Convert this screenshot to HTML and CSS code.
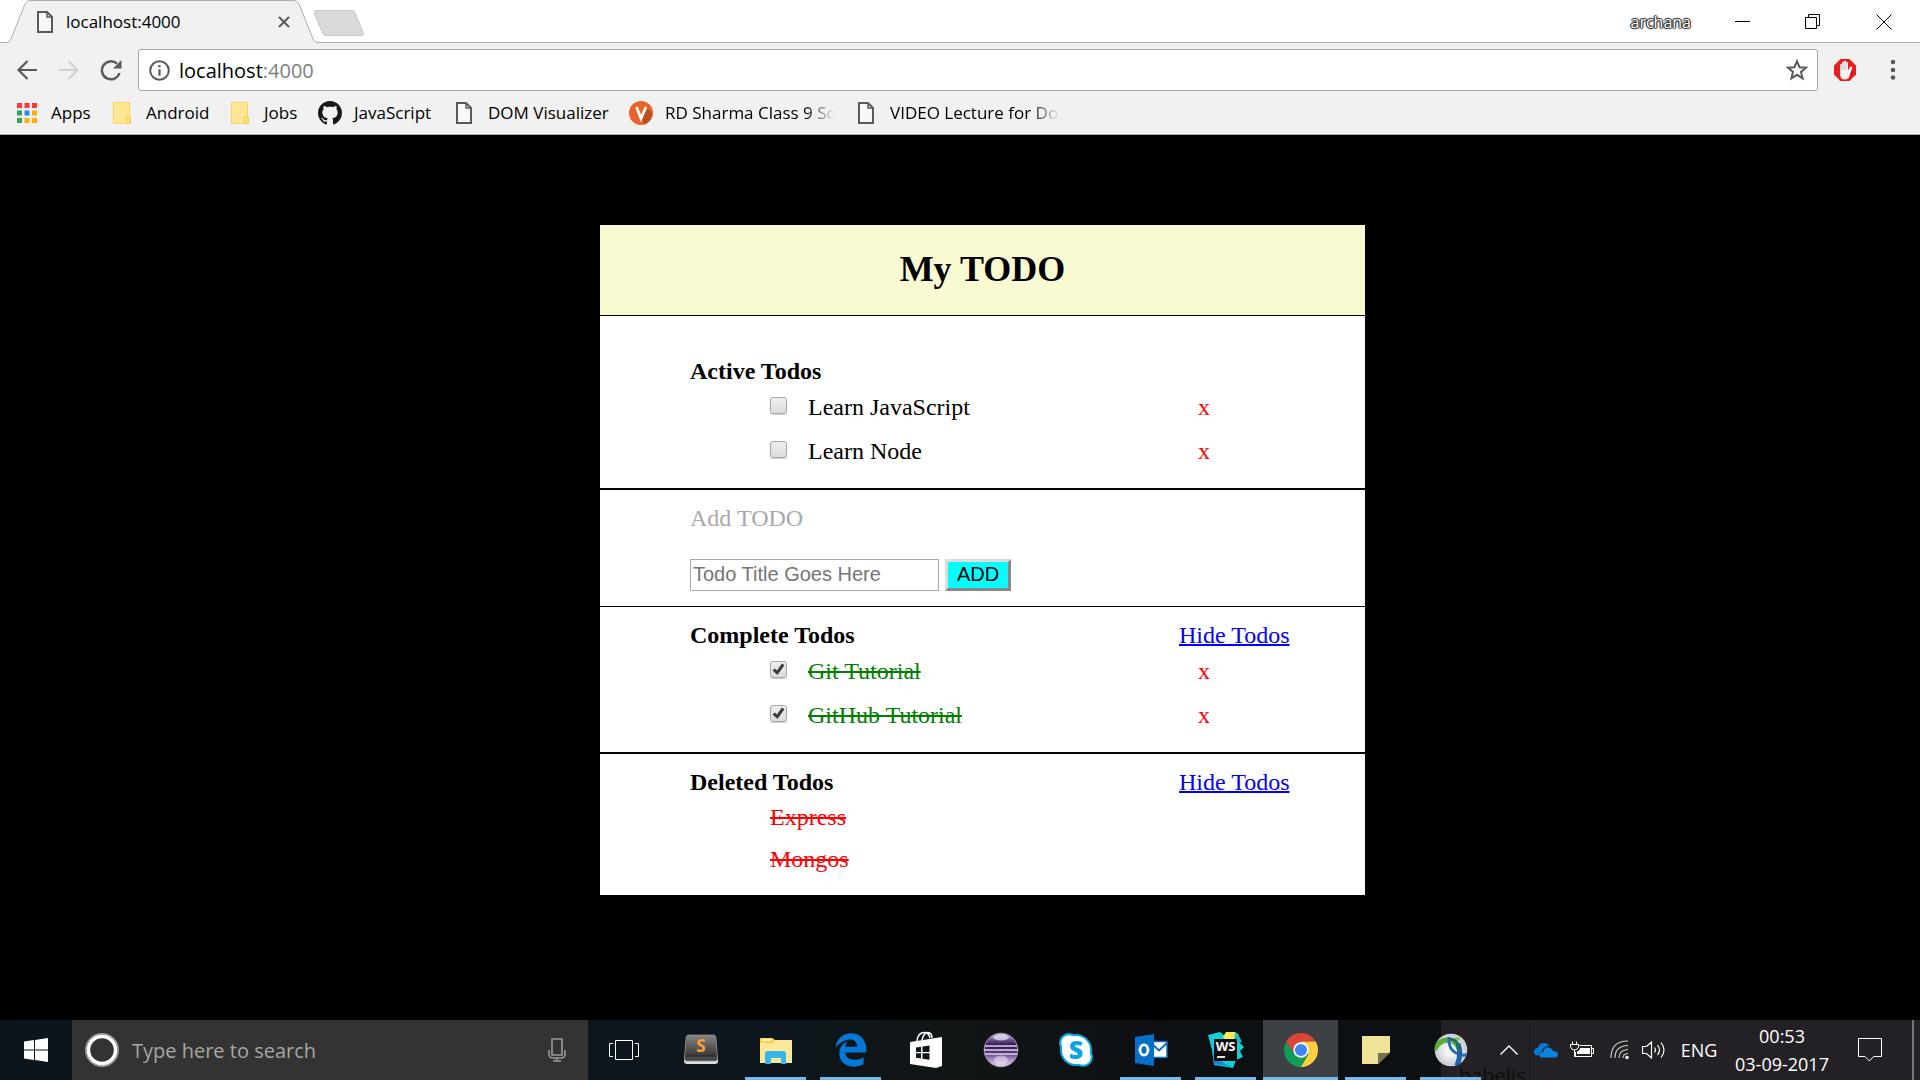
FILE: index.html
```html
<!DOCTYPE html>
<html lang="en">
<head>
<meta charset="utf-8">
<title>localhost:4000</title>
<link rel="stylesheet" href="styles.css">
</head>
<body>
<svg class="defs" width="0" height="0" aria-hidden="true">
  <defs>
    <symbol id="file" viewBox="0 0 16 22"><path d="M1 1h9l5 5v15H1z" fill="#f8f8f8" stroke="#5a5a5a" stroke-width="2"/><path d="M10 1v5h5" fill="none" stroke="#5a5a5a" stroke-width="1.5"/></symbol>
    <symbol id="folder" viewBox="0 0 18 22"><path d="M.5.5h16v14l1 1v6H.5z" fill="#ffe694" stroke="#f7d560"/><path d="M13.5 21.500v-6.500h3.500v6.500z" fill="#ffe694" stroke="#f2cb45"/></symbol>
  </defs>
</svg>

<header class="browser">
  <div class="tabstrip">
    <div class="tab">
      <svg class="tab-shape" viewBox="0 0 312 43" aria-hidden="true"><path d="M0 43L2 42Q3 41 4 39L18 4Q20 .5 23 .5H287Q290 .5 292 4L306 39Q307 42 310 42.500V43z" fill="#f1f1f1"/><path d="M0 42.500Q3 42 4 39L18 4Q20 .5 23 .5H287Q290 .5 292 4L306 39Q307 42 311 42.500" fill="none" stroke="#acacac"/></svg>
      <svg class="tab-icon" width="16" height="22"><use href="#file"/></svg>
      <span class="tab-title">localhost:4000</span>
      <button class="plain tab-close" aria-label="Close tab"><svg width="12" height="12" viewBox="0 0 12 12"><path d="M1 1l10 10M11 1L1 11" stroke="#5a5a5a" stroke-width="2"/></svg></button>
    </div>
    <button class="plain new-tab" aria-label="New tab"><svg width="52" height="26" viewBox="0 0 52 26"><path d="M3 .5H39Q41 .5 42 2.500L50 22Q51 25.500 49 25.500H13Q10.500 25.500 9.500 23L1.500 4Q.5.5 3 .5z" fill="#d9d9d9" stroke="#c9c9c9"/></svg></button>
    <div class="window-controls">
      <span class="user">archana</span>
      <button class="plain" aria-label="Minimize"><svg width="16" height="16" viewBox="0 0 16 16"><path d="M0 7.500h15" stroke="#000"/></svg></button>
      <button class="plain" aria-label="Restore"><svg width="16" height="16" viewBox="0 0 16 16"><path d="M.5 3.500h11v11H.5zM3.500 3V.5h11v11H12" fill="none" stroke="#000"/></svg></button>
      <button class="plain" aria-label="Close"><svg width="16" height="16" viewBox="0 0 16 16"><path d="M.5.5l15 15M15.500.5l-15 15" stroke="#000"/></svg></button>
    </div>
  </div>

  <div class="toolbar">
    <button class="plain nav" aria-label="Back"><svg width="22" height="22" viewBox="0 0 22 22"><path d="M21 11H3M11.500 2L2.500 11l9 9" fill="none" stroke="#5a5a5a" stroke-width="2.200"/></svg></button>
    <button class="plain nav" aria-label="Forward"><svg width="22" height="22" viewBox="0 0 22 22"><path d="M1 11h18M10.500 2l9 9-9 9" fill="none" stroke="#d2d2d2" stroke-width="2.200"/></svg></button>
    <button class="plain nav" aria-label="Reload"><svg width="22" height="22" viewBox="0 0 22 22"><path d="M19.500 14A9 9 0 1 1 17 4.700" fill="none" stroke="#5a5a5a" stroke-width="2.500"/><path d="M21.500 1v8.500H13z" fill="#5a5a5a"/></svg></button>
    <div class="omnibox">
      <svg width="21" height="21" viewBox="0 0 21 21"><circle cx="10.500" cy="10.500" r="9.300" fill="none" stroke="#5a5a5a" stroke-width="2"/><path d="M10.500 5v2.200M10.500 9.200v6.500" stroke="#5a5a5a" stroke-width="2.200"/></svg>
      <span class="url">localhost<span class="port">:4000</span></span>
      <button class="plain star" aria-label="Bookmark this page"><svg width="22" height="22" viewBox="0 0 22 22"><path d="M11 2.200l2.500 6 6.500.5-5 4.200 1.600 6.400-5.600-3.500-5.600 3.500L7 12.900 2 8.700l6.500-.5z" fill="none" stroke="#5a5a5a" stroke-width="2"/></svg></button>
    </div>
    <button class="plain block" aria-label="Ad blocker"><svg width="24" height="24" viewBox="0 0 24 24"><path d="M7.500 1h9L23 7.500v9L16.500 23h-9L1 16.500v-9z" fill="#ec1c1c"/><path d="M13 22l7-6-2-7z" fill="#c41010"/><path d="M7.200 14V6.500q.9-1.500 1.800 0V4.300q1-1.500 2 0V3.200q1-1.500 2 0v1.300q1-1.500 2 0v8l1.800-3.300q1.700-1.500 2.700 0L17 16.500q-1 5-5 5Q7.500 21.500 7.200 17z" fill="#f4f4f4"/><path d="M9 6.500V12M11 4.300V12M13 4.500V12" stroke="#c4b0b0" stroke-width=".7"/></svg></button>
    <button class="plain menu" aria-label="Menu"><svg width="6" height="22" viewBox="0 0 6 22"><g fill="#5a5a5a"><circle cx="3" cy="3" r="2.300"/><circle cx="3" cy="11" r="2.300"/><circle cx="3" cy="18.500" r="2.300"/></g></svg></button>
  </div>

  <nav class="bookmarks">
    <a href="#"><svg width="24" height="24" viewBox="0 0 24 24"><g fill="#f33b3b"><path d="M2 2h5v5H2zM9.500 2h5v5h-5zM17 2h5v5h-5z"/></g><path d="M2 9.500h5v5H2zM2 17h5v5H2z" fill="#34a156"/><path d="M9.500 9.500h5v5h-5z" fill="#1e8cf5"/><path d="M17 9.500h5v5h-5zM9.500 17h5v5h-5zM17 17h5v5h-5z" fill="#fdae0c"/></svg><span>Apps</span></a>
    <a href="#"><svg width="24" height="22"><use href="#folder"/></svg><span>Android</span></a>
    <a href="#"><svg width="24" height="22"><use href="#folder"/></svg><span>Jobs</span></a>
    <a href="#"><svg width="24" height="24" viewBox="0 0 16 16"><path fill="#191717" d="M8 0C3.580 0 0 3.580 0 8c0 3.540 2.290 6.530 5.470 7.590.4.070.55-.17.55-.38 0-.19-.01-.82-.01-1.490-2.010.37-2.530-.49-2.690-.94-.09-.23-.48-.94-.82-1.130-.28-.15-.68-.52-.01-.53.63-.01 1.080.58 1.230.82.72 1.210 1.870.87 2.330.66.070-.52.28-.87.51-1.070-1.780-.2-3.640-.89-3.640-3.950 0-.87.31-1.590.82-2.150-.08-.2-.36-1.020.08-2.120 0 0 .67-.21 2.200.82.64-.18 1.320-.27 2-.27.68 0 1.360.09 2 .27 1.530-1.040 2.200-.82 2.200-.82.44 1.100.16 1.920.08 2.120.51.56.82 1.270.82 2.150 0 3.070-1.870 3.750-3.650 3.950.29.25.54.73.54 1.480 0 1.070-.01 1.930-.01 2.200 0 .21.15.46.55.38A8.013 8.013 0 0016 8c0-4.420-3.580-8-8-8z"/></svg><span>JavaScript</span></a>
    <a href="#"><svg width="24" height="22"><use href="#file"/></svg><span>DOM Visualizer</span></a>
    <a href="#"><svg width="24" height="24" viewBox="0 0 24 24"><circle cx="12" cy="12" r="12" fill="#e8642c"/><path d="M13 18l4.500-12L23 12q0 8-8 11.500z" fill="#b9501f"/><path d="M7.500 6L12 17.500 17 6" fill="none" stroke="#fff" stroke-width="2.800"/></svg><span class="fade">RD Sharma Class 9 Science</span></a>
    <a href="#"><svg width="24" height="22"><use href="#file"/></svg><span class="fade">VIDEO Lecture for Download</span></a>
  </nav>
</header>

<main class="page">
  <div class="card">
    <h1>My TODO</h1>
    <section class="active">
      <h2>Active Todos</h2>
      <ul class="tasks">
        <li><input type="checkbox" id="t1"><label for="t1">Learn JavaScript</label><button class="plain remove">x</button></li>
        <li><input type="checkbox" id="t2"><label for="t2">Learn Node</label><button class="plain remove">x</button></li>
      </ul>
    </section>
    <section class="add">
      <label class="add-label" for="title">Add TODO</label>
      <div class="add-form">
        <input type="text" id="title" placeholder="Todo Title Goes Here">
        <button class="add-button">ADD</button>
      </div>
    </section>
    <section class="complete">
      <div class="head"><h2>Complete Todos</h2><a href="#">Hide Todos</a></div>
      <ul class="tasks done">
        <li><input type="checkbox" id="t3" checked><label for="t3">Git Tutorial</label><button class="plain remove">x</button></li>
        <li><input type="checkbox" id="t4" checked><label for="t4">GitHub Tutorial</label><button class="plain remove">x</button></li>
      </ul>
    </section>
    <section class="deleted">
      <div class="head"><h2>Deleted Todos</h2><a href="#">Hide Todos</a></div>
      <ul class="gone">
        <li>Express</li>
        <li>Mongos</li>
      </ul>
    </section>
  </div>
</main>

<footer class="taskbar">
  <button class="plain start" aria-label="Start"><svg width="24" height="24" viewBox="0 0 24 24"><path d="M0 3.500l10-1.400V11.500H0zM11 2l13-2v11.500H11zM0 12.500h10v9.400L0 20.500zM11 12.500h13V24l-13-2z" fill="#fff"/></svg></button>
  <div class="search">
    <svg width="36" height="36" viewBox="0 0 36 36"><circle cx="18" cy="18" r="15" fill="none" stroke="#999" stroke-width="4"/><circle cx="18" cy="18" r="13.500" fill="none" stroke="#fff" stroke-width="3.400"/></svg>
    <input type="text" aria-label="Search" placeholder="Type here to search">
    <svg width="18" height="24" viewBox="0 0 18 24"><path d="M4 1h10v16H4zM1 12v4q0 4 4 4h8q4 0 4-4v-4M9 20v3M5 23h8" fill="none" stroke="#999" stroke-width="1.600"/></svg>
  </div>
  <button class="plain task-view" aria-label="Task view"><svg width="30" height="20" viewBox="0 0 30 20"><path d="M6.500.5h17v19h-17zM4 3.500H.5v13H4M26 3.500h3.500v13H26" fill="none" stroke="#fff"/></svg></button>

  <button class="plain app" aria-label="Sublime Text"><svg width="36" height="36" viewBox="0 0 36 36"><defs><linearGradient id="sub" x1="0" y1="0" x2="0" y2="1"><stop offset="0" stop-color="#858585"/><stop offset=".75" stop-color="#3d3d3d"/></linearGradient></defs><path d="M4 5L1 29q0 3 3 3h28q3 0 3-3L32 5z" fill="#ddd"/><path d="M5 3h26q1.500 0 2 3l1.500 20q0 3-2 3h-29q-2 0-2-3L3 6q.5-3 2-3z" fill="url(#sub)" stroke="#999" stroke-width=".7"/><path d="M3 24h30v4H3z" fill="#4a4a4a"/><path d="M3 24h30" stroke="#222"/><text x="18" y="20" text-anchor="middle" font-family="Open Sans, sans-serif" font-weight="700" font-size="17" fill="#ffa12c">S</text></svg></button>
  <button class="plain app open" aria-label="File Explorer"><svg width="36" height="36" viewBox="0 0 36 36"><path d="M2 6h12l3 2h17v23H2z" fill="#ffe79a"/><path d="M2 6h12l3 3-2 2H2z" fill="#ffd044"/><path d="M4 8h9" stroke="#fff" stroke-width="1.500"/><path d="M7 32V22q0-3 3-3h15q3 0 3 3v10h-5v-6H13v6z" fill="#37b4ea"/></svg></button>
  <button class="plain app open" aria-label="Edge"><svg width="40" height="40" viewBox="0 0 24 24"><path d="M2.740 10.810C3.830-1.360 22.500-1.360 21.200 13.560H8.610C8.610 17.850 14.420 19.210 19.540 16.310V20.530C13.250 23.880 5 21.430 5 14.090 5 8.580 9.970 6.810 9.970 6.810S8.580 8.580 8.540 10.050H15.700C15.700 2.930 5.900 5.570 2.740 10.810z" fill="#0478d7"/></svg></button>
  <button class="plain app" aria-label="Store"><svg width="34" height="38" viewBox="0 0 34 38"><path d="M1 11l32-5v29l-6 2-26-4z" fill="#fff"/><path d="M8 10Q9 1 16 1.500 20 2 21 7M13 9Q15 1 19 1.500 23 2 23 7" fill="none" stroke="#fff" stroke-width="1.500"/><path d="M7 16.500l5-.8v5.300H7zM13.500 15.500l7-1v6.500h-7zM7 22.300h5v5.200l-5-.7zM13.500 22.300h7v6.500l-7-1z" fill="#10171a"/></svg></button>
  <button class="plain app" aria-label="Eclipse"><svg width="36" height="36" viewBox="0 0 36 36"><defs><linearGradient id="ecl" x1="0" y1="0" x2="0" y2="1"><stop offset="0" stop-color="#cdbfda"/><stop offset=".2" stop-color="#6d5488"/><stop offset=".36" stop-color="#2c1550"/><stop offset=".6" stop-color="#5d3c82"/><stop offset=".75" stop-color="#9f83ba"/><stop offset="1" stop-color="#e6dcee"/></linearGradient></defs><circle cx="18" cy="18" r="16.800" fill="url(#ecl)" stroke="#a994bd"/><ellipse cx="18" cy="5.500" rx="8" ry="3" fill="#eee8f4" opacity=".7"/><ellipse cx="18" cy="28" rx="7" ry="4.500" fill="#f3edf7" opacity=".5"/><path d="M2 14h32M1 18h34M2 22h32" stroke="#e0d5ea" stroke-width="1.300"/></svg></button>
  <button class="plain app" aria-label="Skype"><svg width="36" height="36" viewBox="0 0 36 36"><g fill="#0aa6e2"><circle cx="18" cy="18" r="16"/><circle cx="11" cy="11" r="10"/><circle cx="25" cy="25" r="10"/></g><g fill="#fff"><circle cx="18" cy="18" r="14"/><circle cx="11" cy="11" r="7.800"/><circle cx="25" cy="25" r="7.800"/></g><text x="18" y="27" text-anchor="middle" font-family="Open Sans, sans-serif" font-weight="800" font-size="25" fill="#0aa6e2">S</text></svg></button>
  <button class="plain app open" aria-label="Outlook"><svg width="36" height="36" viewBox="0 0 36 36"><path d="M19 9.500h15v16H19z" fill="#fff" stroke="#0a6cbd" stroke-width="1.500"/><path d="M19 12l7 6.500 8-7.500" fill="none" stroke="#0a6cbd" stroke-width="2"/><path d="M2 5l19-3v32L2 31z" fill="#0670c8"/><ellipse cx="11" cy="18" rx="4" ry="5.200" fill="none" stroke="#fff" stroke-width="2.800"/></svg></button>
  <button class="plain app open" aria-label="WebStorm"><svg width="38" height="38" viewBox="0 0 38 38"><path d="M1 4l12-3 4 3 8-3 7 10 5 5-4 4 3 6-7 3-3 8-19-3-2-15z" fill="#0ed1dc"/><path d="M16 6l3-5h9l4 3-11 9z" fill="#f5ef4e"/><path d="M28 1l4 4 3 6-8 2z" fill="#12bfcf"/><path d="M6 24l12 9 8 3-19-3z" fill="#1586d8"/><path d="M7 8h23v22H7z" fill="#0b0b0b"/><text x="18.500" y="20" text-anchor="middle" font-family="Open Sans, sans-serif" font-weight="700" font-size="13" fill="#fff">WS</text><path d="M10 26h8" stroke="#fff" stroke-width="1.800"/></svg></button>
  <button class="plain app open current" aria-label="Chrome"><svg width="34" height="34" viewBox="0 0 34 34"><path d="M17 17L2.300 8.500A17 17 0 0 1 31.700 8.500H17z" fill="#db4437"/><path d="M17 17l7.400 4.300L17 34A17 17 0 0 1 2.300 8.500L9.600 21.300z" fill="#0f9d58"/><path d="M17 8.500h14.700A17 17 0 0 1 17 34l7.400-12.700z" fill="#ffcd40"/><path d="M2.300 8.500L17 8.500v8.500L9.600 21.300z" fill="#db4437"/><path d="M2.300 8.500l7.300 12.800L17 30z" fill="#0f9d58"/><circle cx="17" cy="17" r="7.700" fill="#fff"/><circle cx="17" cy="17" r="6.100" fill="#4285f4"/></svg></button>
  <button class="plain app open" aria-label="Sticky Notes"><svg width="28" height="28" viewBox="0 0 28 28"><path d="M0 0h28v16L16 28H0z" fill="#efe498"/><path d="M16 28V17h12z" fill="#75704e"/></svg></button>
  <button class="plain app open last" aria-label="AnyConnect"><svg width="34" height="34" viewBox="0 0 34 34"><defs><radialGradient id="orb"><stop offset=".3" stop-color="#f4f6f7"/><stop offset="1" stop-color="#c4cacd"/></radialGradient><clipPath id="disc"><circle cx="17" cy="17" r="16.500"/></clipPath></defs><g clip-path="url(#disc)"><circle cx="17" cy="17" r="16.500" fill="url(#orb)"/><path d="M0 17Q5 7 14 7q8 0 11 9" fill="none" stroke="#56ae35" stroke-width="5"/><path d="M15 10q5-5 11-4" fill="none" stroke="#8cc36f" stroke-width="3"/><path d="M15 4q-1 12 7 16t12 1" fill="none" stroke="#2a6fa8" stroke-width="3"/><path d="M24 11q4 9-1 22" fill="none" stroke="#1c60ab" stroke-width="5"/><path d="M16 6q9 1 9 11" fill="none" stroke="#1f7060" stroke-width="3"/></g></svg></button>

  <div class="tray">
    <span class="desktop-label">babelis</span>
    <button class="plain chevron" aria-label="Show hidden icons"><svg width="18" height="10" viewBox="0 0 18 10"><path d="M.5 9.500L9 1l8.500 8.500" fill="none" stroke="#fff" stroke-width="1.400"/></svg></button>
    <button class="plain cloud" aria-label="OneDrive"><svg width="26" height="16" viewBox="0 0 26 16"><path d="M7 13Q1 14 1 10t4-4.500Q6 1 11 1q4 0 5 3-7 1-7 6-2 0-2 3z" fill="#0478d7"/><path d="M8 15.500q-3-2-.5-4.500l2.500-.7Q11 5 15.500 5.500 19 6 20 9q5 0 5 3.500 0 3-3 3z" fill="#0a82df"/></svg></button>
    <button class="plain battery" aria-label="Battery"><svg width="24" height="18" viewBox="0 0 24 18"><path d="M9.500 4.500h12v11h-16V11M22 7.500h1.500v5H22" fill="none" stroke="#fff"/><path d="M10 7h10v6H7v-2.500q3-1 3-3.500z" fill="#fff"/><path d="M2.500.5v3M6.500.5v3M.5 3.500h8V6q-1 3-4 3T.5 6zM4.500 9v6.500h2" fill="none" stroke="#fff"/></svg></button>
    <button class="plain wifi" aria-label="Wi-Fi"><svg width="20" height="20" viewBox="0 0 20 20"><g fill="none" stroke="#c8c8c8" stroke-width="1.200"><path d="M1 18Q1 1 18 1M5 18Q5 6 18 5.500M9 18q0-8 9-8.500M13 18q0-4 5-4.500"/></g><circle cx="17" cy="17.500" r="1.800" fill="#fff"/></svg></button>
    <button class="plain volume" aria-label="Volume"><svg width="24" height="18" viewBox="0 0 24 18"><path d="M.5 5.500h4L9.500 1v16l-5-4.500h-4zM12.500 6.500q2 2.500 0 5M15.500 4q4 5 0 10M19 1.500q6 7.500 0 15" fill="none" stroke="#fff" stroke-width="1.200"/></svg></button>
    <button class="plain lang">ENG</button>
    <button class="plain clock"><span>00:53</span><span>03-09-2017</span></button>
    <button class="plain notify" aria-label="Notifications"><svg width="24" height="24" viewBox="0 0 24 24"><path d="M.5.500h23v18h-8L11.500 23l-4.500-4.500H.5z" fill="none" stroke="#fff"/></svg></button>
    <button class="plain show-desktop" aria-label="Show desktop"></button>
  </div>
</footer>
</body>
</html>
```
FILE: styles.css
```css
* { box-sizing: border-box; }

body {
  margin: 0;
  min-height: 100vh;
  display: flex;
  flex-direction: column;
  background: #000;
  color: #000;
}

svg { display: block; flex: none; }
.defs { position: absolute; }

.plain {
  padding: 0;
  border: 0;
  background: none;
  font: inherit;
  color: inherit;
  display: flex;
  align-items: center;
  justify-content: center;
}

/* Browser window */
.browser {
  font-family: "Open Sans", "Noto Sans", sans-serif;
  font-size: 17px;
  background: #f1f1f1;
  border-bottom: 1px solid #a9a9a9;
}

.tabstrip {
  display: flex;
  height: 43px;
  padding-left: 7px;
  background: #fff;
  box-shadow: inset 0 -1px #acacac;
}

.tab {
  position: relative;
  width: 306px;
  padding: 0 23px 0 30px;
  display: flex;
  align-items: center;
}
.tab-shape { position: absolute; left: 0; top: 0; width: 312px; height: 43px; }
.tab-icon, .tab-title, .tab-close { position: relative; }
.tab-title { flex: 1; margin-left: 13px; }

.new-tab { align-items: flex-start; padding-top: 10px; }

.window-controls {
  margin-left: auto;
  display: flex;
  align-items: center;
}
.window-controls button { width: 70px; height: 41px; }
.window-controls button:last-child { width: 72px; }
.user {
  margin-right: 17px;
  font-size: 16px;
  line-height: 38px;
  color: #fff;
  text-shadow: -1px 0 1px #222, 1px 0 1px #222, 0 -1px 1px #222, 0 1px 1px #222, 0 0 2px #222;
}

.toolbar {
  display: flex;
  align-items: center;
  padding: 6px 24px 0 6px;
}
.nav { width: 42px; height: 42px; }
.omnibox {
  flex: 1;
  height: 42px;
  margin-left: 6px;
  padding: 0 9px 0 10px;
  display: flex;
  align-items: center;
  gap: 9px;
  background: #fff;
  border: 1px solid #a6a6a6;
  border-radius: 3px;
}
.url { flex: 1; font-size: 20px; }
.port { color: #808080; }
.block { margin-left: 15px; }
.menu { margin-left: 33px; }

.bookmarks {
  height: 43px;
  padding-left: 15px;
  display: grid;
  grid-template-columns: 95px 118px 90px 134px 177px 225px 205px;
  align-items: center;
}
.bookmarks a {
  display: flex;
  align-items: center;
  gap: 12px;
  color: #000;
  text-decoration: none;
  white-space: nowrap;
}
.fade {
  width: 170px;
  overflow: hidden;
  -webkit-mask-image: linear-gradient(to right, #000 140px, transparent);
  mask-image: linear-gradient(to right, #000 140px, transparent);
}

/* Todo page */
.page {
  flex: 1;
  padding: 90px 0;
  display: grid;
  grid-template-columns: 600fr 765fr 555fr;
  align-items: start;
  font-family: "Liberation Serif", "Times New Roman", serif;
  font-size: 24px;
  line-height: 28px;
}
.card { grid-column: 2; background: #fff; }

h1 {
  margin: 0;
  padding: 24px 0 25px;
  font-size: 36px;
  line-height: 41px;
  text-align: center;
  background: #fafad2;
}
section { padding: 14px 0 15px 90px; border-top: 2px solid #000; }
.active { padding-top: 41px; border-top-width: 1px; }
.complete { border-top-width: 1px; }
h2 { margin: 0; font-size: 24px; }

.head { display: grid; grid-template-columns: 489fr 186fr; }
.head a { color: #00f; text-decoration-thickness: 2px; }

ul { margin: 0; padding: 0 0 0 80px; list-style: none; }
.tasks li {
  display: grid;
  grid-template-columns: 38px 390fr 167fr;
  line-height: 44px;
}
.tasks input {
  appearance: none;
  width: 17px;
  height: 17px;
  margin: 12px 0 0;
  border: 1px solid #a8a8a8;
  border-radius: 3px;
  background: linear-gradient(#eee, #dcdcdc);
  box-shadow: 0 1px 1px #ccc;
}
.tasks input:checked::after {
  content: "";
  display: block;
  width: 13px;
  height: 13px;
  margin: 1px;
  background: #3c3c3c;
  clip-path: polygon(4% 58%, 22% 42%, 38% 58%, 76% 4%, 96% 18%, 42% 92%);
}
.done label { color: #008000; text-decoration: line-through 2px; }
.remove { justify-content: flex-start; color: #f00; }
.gone { color: #f00; line-height: 42px; }
.gone li { text-decoration: line-through 2px; }

.add-label { display: block; color: #a9a9a9; }
.add-form {
  display: flex;
  gap: 6px;
  margin-top: 27px;
}
.add-form input, .add-button { height: 32px; font: 20px "Liberation Sans", Arial, sans-serif; }
.add-form input { width: 249px; padding: 0 2px 2px; border: 1px solid #a9a9a9; }
.add-form input::placeholder { color: #757575; }
.add-button {
  width: 66px;
  padding: 0 0 2px;
  background: #0ff;
  border: 3px solid;
  border-color: #ddd #888 #888 #ddd;
}

/* Taskbar */
.taskbar {
  height: 60px;
  display: flex;
  background: linear-gradient(to right, #0b151b, #0c161c 40%, #111516 50%, #0c1013 60%, #0d1113);
  color: #fff;
  font-family: "Open Sans", "Noto Sans", sans-serif;
  font-size: 18px;
}
.start { width: 72px; }
.search {
  width: 516px;
  padding: 0 22px 0 12px;
  display: flex;
  align-items: center;
  background: #333;
}
.search input {
  flex: 1;
  padding: 0 0 0 12px;
  border: 0;
  background: none;
  font: 20px "Open Sans", "Noto Sans", sans-serif;
}
.search input::placeholder { color: #a6a6a6; }
.task-view { width: 75px; padding-right: 3px; }
.app { position: relative; width: 75px; }
.open::after {
  content: "";
  position: absolute;
  z-index: 1;
  left: 7px;
  right: 7px;
  bottom: 0;
  height: 3px;
  background: #76b9ed;
}
.current { background: #3d4145; }
.current::after { left: 0; right: 0; }
.last { background: linear-gradient(to right, transparent 28px, #232126 28px); }

.tray {
  position: relative;
  flex: 1;
  display: flex;
  justify-content: flex-end;
  background: #232126;
}
.desktop-label {
  position: absolute;
  left: -29px;
  top: 44px;
  height: 16px;
  overflow: hidden;
  font-size: 20px;
  line-height: 24px;
  color: #0c0c0c;
}
.chevron { width: 41px; border-right: 1px solid #1b1a1e; }
.cloud { width: 32px; }
.battery { width: 40px; }
.wifi { width: 35px; }
.volume { width: 34px; }
.lang { width: 56px; }
.clock { width: 110px; flex-direction: column; line-height: 28px; }
.notify { width: 66px; }
.show-desktop { width: 8px; margin-left: 9px; border-left: 2px solid #777; }
```
